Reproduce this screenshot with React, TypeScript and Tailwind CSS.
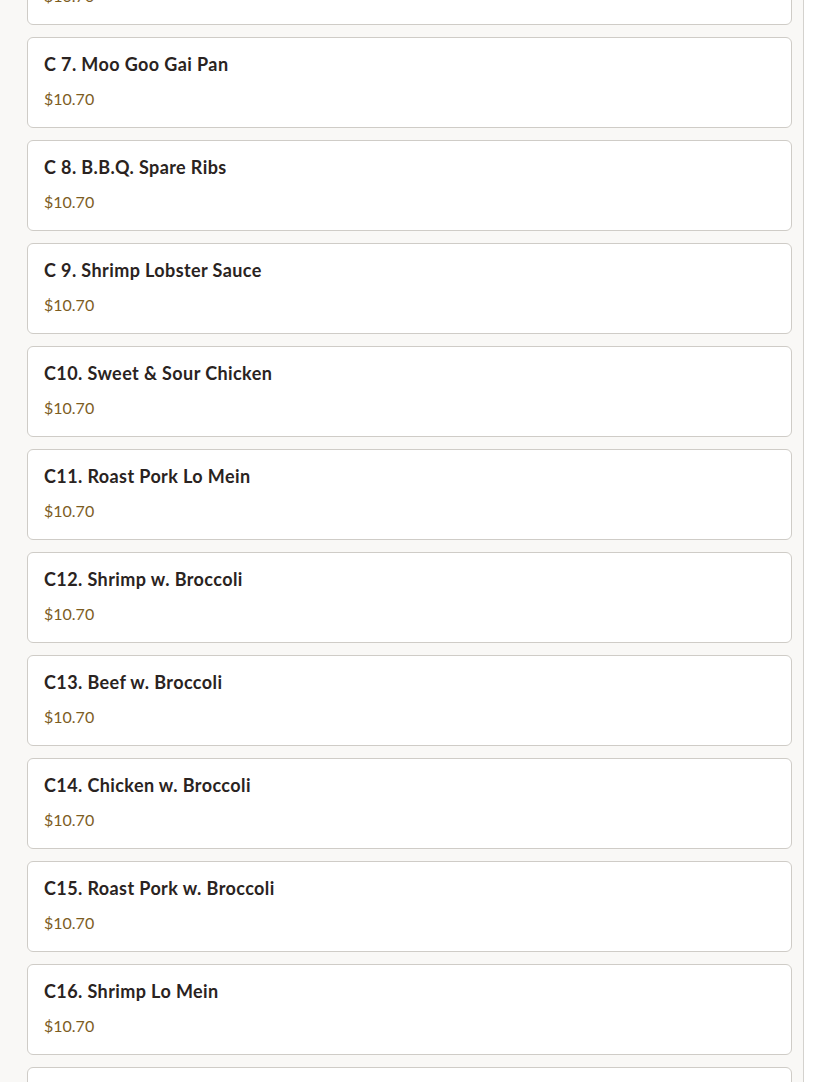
import React from 'react';

const items = [
  'C 6. Pepper Steak w. Onion',
  'C 7. Moo Goo Gai Pan',
  'C 8. B.B.Q. Spare Ribs',
  'C 9. Shrimp Lobster Sauce',
  'C10. Sweet & Sour Chicken',
  'C11. Roast Pork Lo Mein',
  'C12. Shrimp w. Broccoli',
  'C13. Beef w. Broccoli',
  'C14. Chicken w. Broccoli',
  'C15. Roast Pork w. Broccoli',
  'C16. Shrimp Lo Mein',
  'C17. Chicken Lo Mein',
];

export default function App() {
  return (
    <div className="min-h-screen bg-white" style={{ fontFamily: 'Lato, "Noto Sans", sans-serif' }}>
      <div className="w-[804px] h-[1082px] overflow-hidden bg-[#f9f8f6] border-r border-[#d4d2ce] pl-[27px] pr-[11px]">
        <div className="flex flex-col gap-3 -mt-[66px]">
          {items.map((name) => (
            <div key={name} className="h-[91px] bg-white border border-[#cfccc7] rounded-md px-4 pt-[14px]">
              <div className="text-[18px] leading-6 font-bold tracking-[0.4px] text-[#2a2321]">{name}</div>
              <div className="mt-[11px] text-[16px] leading-6 text-[#7d5d1f]">$10.70</div>
            </div>
          ))}
        </div>
      </div>
    </div>
  );
}
